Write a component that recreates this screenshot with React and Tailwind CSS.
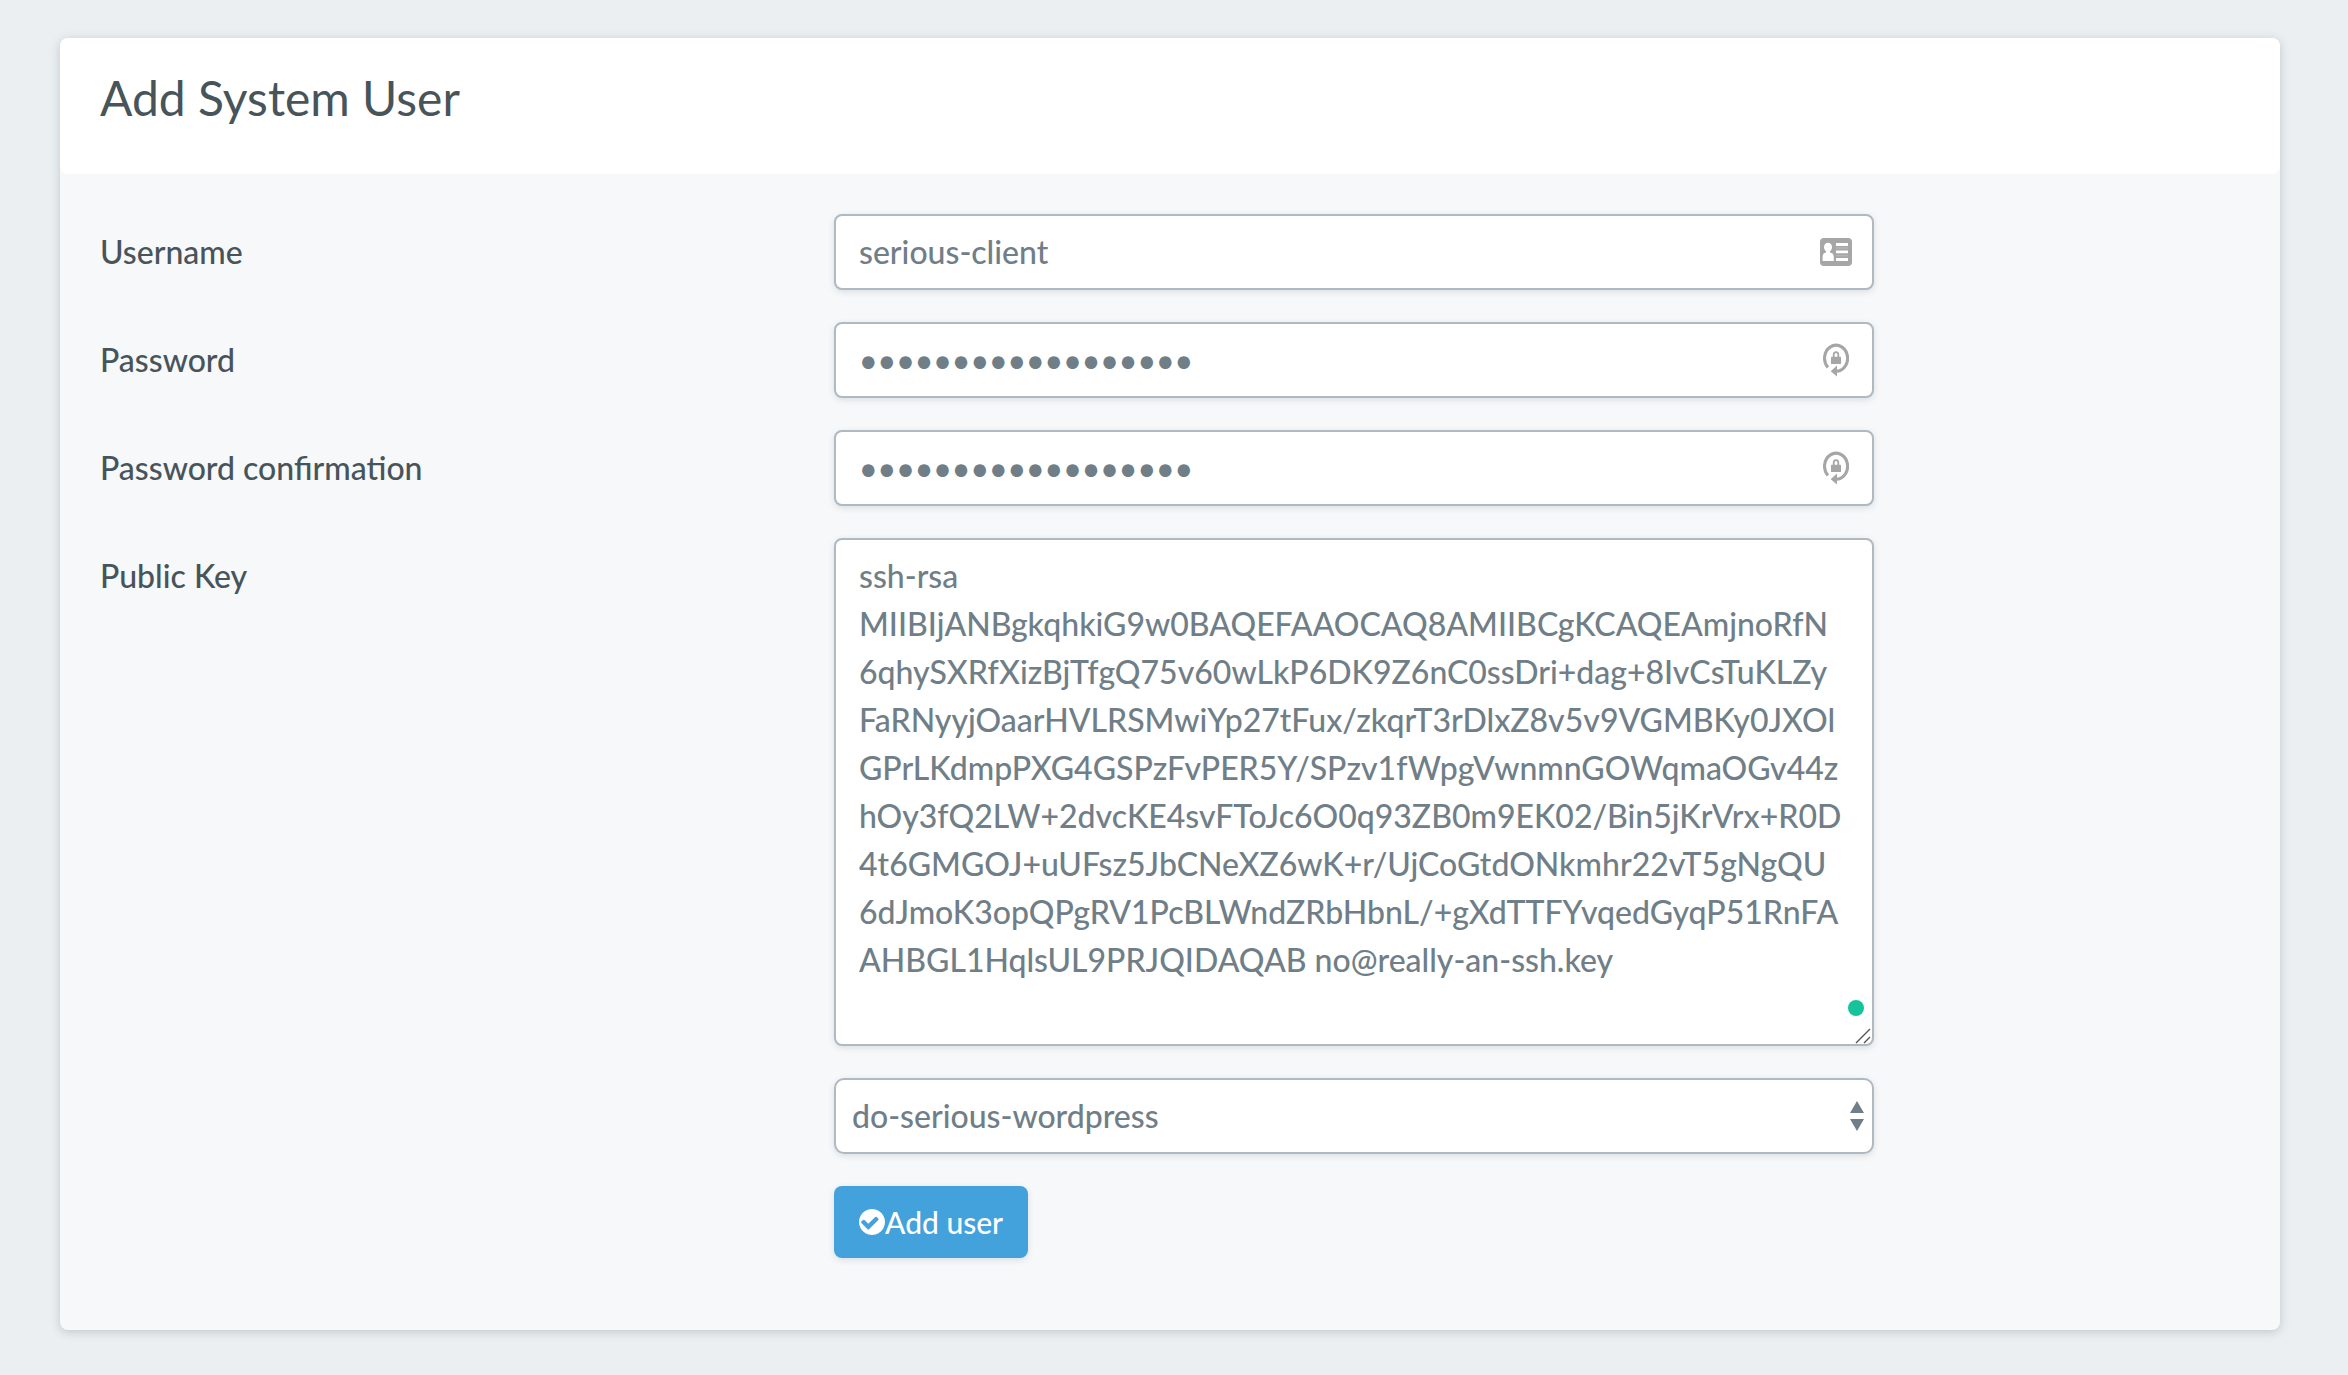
import { useState } from 'react';

const publicKey = [
  'ssh-rsa',
  'MIIBIjANBgkqhkiG9w0BAQEFAAOCAQ8AMIIBCgKCAQEAmjnoRfN',
  '6qhySXRfXizBjTfgQ75v60wLkP6DK9Z6nC0ssDri+dag+8IvCsTuKLZy',
  'FaRNyyjOaarHVLRSMwiYp27tFux/zkqrT3rDlxZ8v5v9VGMBKy0JXOl',
  'GPrLKdmpPXG4GSPzFvPER5Y/SPzv1fWpgVwnmnGOWqmaOGv44z',
  'hOy3fQ2LW+2dvcKE4svFToJc6O0q93ZB0m9EK02/Bin5jKrVrx+R0D',
  '4t6GMGOJ+uUFsz5JbCNeXZ6wK+r/UjCoGtdONkmhr22vT5gNgQU',
  '6dJmoK3opQPgRV1PcBLWndZRbHbnL/+gXdTTFYvqedGyqP51RnFA',
  'AHBGL1HqlsUL9PRJQIDAQAB no@really-an-ssh.key',
].join('\n');

const fieldClass =
  'block w-full border-2 border-[#afb9c1] bg-white text-[32px] leading-[48px] font-medium text-[#6f7e87] shadow-[0_2px_6px_rgba(60,80,90,0.15)] outline-none';

function IdCardIcon() {
  return (
    <svg viewBox="0 0 32 28" className="w-8 h-7" aria-hidden="true">
      <rect width="32" height="28" rx="4" fill="#a6a6a6" />
      <g fill="#fff">
        <ellipse cx="8" cy="9.2" rx="4" ry="4.5" />
        <path d="M6 12h4v2.4c2.4.4 3.8 1.6 3.8 4.6v4H2.6v-4c0-3 1.2-4.2 3.4-4.6z" />
        <path d="M16 5h12v3H16zM16 12.4h12v2.8H16zM16 20h12v3H16z" />
      </g>
      <path d="M16 10h12M16 17.8h12" stroke="#bdbdbd" strokeWidth="1" />
    </svg>
  );
}

function LockIcon() {
  return (
    <svg viewBox="0 0 26 34" className="w-[26px] h-[34px]" fill="none" aria-hidden="true">
      <path d="M4.9 24.4A11.5 13 0 1 1 14 28.2" stroke="#a6a6a6" strokeWidth="3.1" />
      <path d="M7.7 28.2 14 22.4v11z" fill="#a6a6a6" />
      <rect x="8" y="13.8" width="10" height="7.2" rx="0.6" fill="#a6a6a6" />
      <path d="M10.7 14v-2.4c0-3.4 4.6-3.4 4.6 0V14" stroke="#a6a6a6" strokeWidth="1.8" />
    </svg>
  );
}

function CheckIcon() {
  return (
    <svg viewBox="128 128 1536 1536" className="w-[26px] h-[26px]" fill="currentColor" aria-hidden="true">
      <path d="M1284 734q0-28-18-46l-91-90q-19-19-45-19t-45 19l-408 407-226-226q-19-19-45-19t-45 19l-91 90q-18 18-18 46 0 27 18 45l362 362q19 19 45 19 27 0 46-19l543-543q18-18 18-45zm380 162q0 209-103 385.5t-279.5 279.5-385.5 103-385.5-103-279.5-279.5-103-385.5 103-385.5 279.5-279.5 385.5-103 385.5 103 279.5 279.5 103 385.5z" />
    </svg>
  );
}

function Row({ label, id, children }) {
  return (
    <div className="flex">
      <div className="w-[34.3%] pt-[14px]">
        {label && (
          <label htmlFor={id} className="block text-[32px] leading-[48px] font-medium text-[#475459]">
            {label}
          </label>
        )}
      </div>
      <div className="w-[48.6%] relative">{children}</div>
    </div>
  );
}

export default function App() {
  const [form, setForm] = useState({
    username: 'serious-client',
    password: 'correcthorsebatter',
    confirmation: 'correcthorsebatter',
    key: publicKey,
    server: 'do-serious-wordpress',
  });

  const update = (e) => setForm({ ...form, [e.target.name]: e.target.value });

  const inputs = [
    { name: 'username', label: 'Username', type: 'text', icon: IdCardIcon },
    { name: 'password', label: 'Password', type: 'password', icon: LockIcon },
    { name: 'confirmation', label: 'Password confirmation', type: 'password', icon: LockIcon },
  ];

  return (
    <div className="min-h-screen bg-[#ebeff2] pl-[60px] pr-[68px] pt-[38px] pb-[45px] font-['Lato',sans-serif]">
      <div className="rounded-lg bg-[#f7f8fa] shadow-[0_2px_10px_rgba(60,80,90,0.25)]">
        <div className="rounded-lg bg-white px-10 pt-[30px] pb-[46px]">
          <h1 className="text-[48px] leading-[60px] text-[#475459]">Add System User</h1>
        </div>

        <form className="flex flex-col gap-8 px-10 pt-10 pb-[72px]" onSubmit={(e) => e.preventDefault()}>
          {inputs.map((input) => (
            <Row key={input.name} label={input.label} id={input.name}>
              <input
                id={input.name}
                name={input.name}
                type={input.type}
                value={form[input.name]}
                onChange={update}
                className={`${fieldClass} rounded-lg py-3 pl-[23px] pr-16`}
              />
              <span className="absolute inset-y-0 right-0 w-[76px] flex items-center justify-center pointer-events-none">
                <input.icon />
              </span>
            </Row>
          ))}

          <Row label="Public Key" id="key">
            <textarea
              id="key"
              name="key"
              rows={10}
              value={form.key}
              onChange={update}
              spellCheck={false}
              className={`${fieldClass} rounded-lg resize-none overflow-hidden py-3 pl-[23px] pr-4`}
            />
            <span className="absolute right-[10px] bottom-[30px] size-4 rounded-full bg-[#17c39b]" />
            <svg viewBox="0 0 16 16" className="absolute right-[3px] bottom-[2px] size-4" fill="none" aria-hidden="true">
              <path d="M1 15 15 1M9 15l6-6" stroke="#555" strokeWidth="1.4" />
            </svg>
          </Row>

          <Row>
            <select
              name="server"
              aria-label="Server"
              value={form.server}
              onChange={update}
              className={`${fieldClass} rounded-[10px] appearance-none py-3 px-4`}
            >
              <option>do-serious-wordpress</option>
            </select>
            <svg
              viewBox="0 0 14 30"
              className="absolute right-[10px] top-[23px] w-[14px] h-[30px] pointer-events-none"
              fill="#6f7e87"
              aria-hidden="true"
            >
              <path d="M7 0l7 12H0zM0 18h14L7 30z" />
            </svg>
          </Row>

          <Row>
            <button
              type="submit"
              className="flex items-center rounded-lg bg-[#43a1dc] px-[25px] py-3 text-[30px] leading-[48px] font-medium text-white shadow-[0_2px_6px_rgba(60,80,90,0.15)]"
            >
              <CheckIcon />
              Add user
            </button>
          </Row>
        </form>
      </div>
    </div>
  );
}
